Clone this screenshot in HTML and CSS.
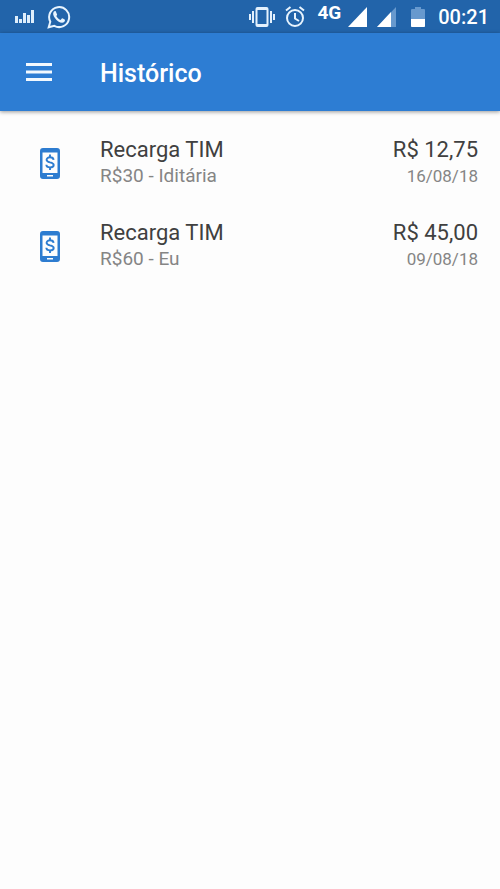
FILE: index.html
```html
<!DOCTYPE html>
<html lang="pt-BR">
<head>
<meta charset="utf-8">
<meta name="viewport" content="width=device-width, initial-scale=1">
<title>Histórico</title>
<link rel="stylesheet" href="styles.css">
</head>
<body>
<svg class="symbols" aria-hidden="true">
  <symbol id="phone-money" viewBox="0 0 20 31">
    <path fill="#2d7cd0" fill-rule="evenodd" d="M3 0H17Q20 0 20 3V28Q20 31 17 31H3Q0 31 0 28V3Q0 0 3 0ZM2.500 4.500V25H17.500V4.500ZM7 27V28.500H13V27Z"/>
    <path fill="none" stroke="#2d7cd0" stroke-width="1.900" d="M10 6.500V9.500M10 19V22M13.600 11.800C13.400 10.100 12 9.200 10 9.200C8.100 9.200 6.600 10.200 6.600 11.800C6.600 13.400 8.100 13.900 10 14.400C12.200 14.900 13.700 15.600 13.700 17C13.700 18.500 12.100 19.400 10 19.400C7.900 19.400 6.400 18.400 6.300 16.700"/>
  </symbol>
</svg>
<div class="status">
  <div class="status-group notices">
    <svg width="19" height="13" viewBox="0 0 19 13" fill="#dfeefb"><path d="M0 6h3v7H0zM4 9h3v4H4zM8 3h3v10H8zM12 5h3v8h-3zM16 0h3v13h-3z"/></svg>
    <svg width="24" height="24" viewBox="0 0 24 24"><path fill="none" stroke="#e8f4fe" stroke-width="2" d="M1.700 22.300 3.300 16.700A10 10 0 1 1 7.300 20.800Z"/><path fill="#e8f4fe" d="M8.700 6.300C8.400 5.800 7.400 5.900 6.900 6.500C5.500 8.200 6.200 10.500 7.900 12.900C9.900 15.700 12.700 17.700 15.100 17.700C16.700 17.600 18.100 16.500 18 14.900C18 14.500 15.800 13.400 15.200 13.300C14.700 13.300 14.200 14.600 13.600 15C12.300 14.700 10 12.600 9.300 11.100C9.400 10.600 10.200 10 10.100 9.400Z"/></svg>
  </div>
  <div class="status-group system">
    <svg width="26" height="20" viewBox="0 0 26 20" fill="#e4f1fd"><path fill-rule="evenodd" d="M8.500 0h9q2 0 2 2v16q0 2-2 2h-9q-2 0-2-2V2q0-2 2-2zm0 3v14h9V3zM3 4h2v12H3zM0 7h2v6H0zM21 4h2v12h-2zM24 7h2v6h-2z"/></svg>
    <svg width="20" height="21" viewBox="0 0 20 21" fill="none" stroke="#e8f4fe" stroke-width="2"><circle cx="10" cy="12" r="8"/><path d="M1 4.500 5.500 1M14.500 1 19 4.500M10 7v5.500l4 2.500"/></svg>
    <span class="network">4G</span>
    <svg width="19" height="20" viewBox="0 0 19 20"><path fill="#fff" d="M19 0V20H0Z"/></svg>
    <svg width="19" height="20" viewBox="0 0 19 20"><path fill="#6799ce" d="M19 0V20H0Z"/><path fill="#fff" d="M14 5V20H0Z"/></svg>
    <svg class="battery" width="14" height="20" viewBox="0 0 14 20"><path fill="#6799ce" d="M4 0h6v2h3q1 0 1 1v16q0 1-1 1H1q-1 0-1-1V3q0-1 1-1h3z"/><path fill="#fff" d="M0 12h14v7q0 1-1 1H1q-1 0-1-1z"/></svg>
    <time class="clock">00:21</time>
  </div>
</div>
<header class="appbar">
  <button class="menu" type="button" aria-label="Menu"><svg width="26" height="18" viewBox="0 0 26 18" fill="#f2f9ff"><path d="M0 0h26v3H0zM0 7.500h26v3H0zM0 15h26v3H0z"/></svg></button>
  <h1>Histórico</h1>
</header>
<main>
  <ul class="history">
    <li class="entry">
      <svg class="entry-icon" width="20" height="31"><use href="#phone-money"/></svg>
      <div class="details"><div class="primary">Recarga TIM</div><div class="secondary">R$30 - Iditária</div></div>
      <div class="amount"><div class="primary">R$ 12,75</div><div class="date">16/08/18</div></div>
    </li>
    <li class="entry">
      <svg class="entry-icon" width="20" height="31"><use href="#phone-money"/></svg>
      <div class="details"><div class="primary">Recarga TIM</div><div class="secondary">R$60 - Eu</div></div>
      <div class="amount"><div class="primary">R$ 45,00</div><div class="date">09/08/18</div></div>
    </li>
  </ul>
</main>
</body>
</html>
```
FILE: styles.css
```css
* { box-sizing: border-box; }
body { margin: 0; min-height: 100vh; background: #fdfdfd; font-family: Roboto, "Liberation Sans", sans-serif; color: #404040; }
svg { display: block; flex: none; }
.symbols { position: absolute; width: 0; height: 0; }
.status { display: flex; justify-content: space-between; height: 33px; padding: 0 11px 0 15px; background: #2264aa; color: #fff; }
.status-group { display: flex; align-items: center; }
.notices { gap: 13px; }
.system { gap: 10px; }
.network { align-self: flex-start; margin: 1px -3px 0 2px; font-size: 19px; line-height: 24px; font-weight: 700; }
.battery { margin: 0 3px 0 5px; }
.clock { font-size: 20px; line-height: 34px; font-weight: 500; }
.appbar { display: flex; align-items: center; height: 78px; padding-left: 14px; background: #2d7dd3; box-shadow: 0 1px 4px rgba(0, 0, 0, .4); }
.menu { display: flex; align-items: center; width: 86px; height: 48px; padding: 0 12px; border: 0; background: none; }
h1 { margin: 0; padding-top: 4px; font-size: 25px; line-height: 32px; font-weight: 500; color: #fff; }
.history { margin: 0; padding: 11px 0; list-style: none; }
.entry { display: flex; align-items: center; height: 83px; padding: 0 22px 0 40px; }
.entry-icon { margin-right: 40px; }
.details, .amount { padding-bottom: 4px; }
.details { flex: 1; }
.amount { text-align: right; }
.primary { font-size: 22px; line-height: 28px; }
.secondary, .date { line-height: 24px; color: #858585; }
.secondary { font-size: 19px; }
.date { font-size: 17px; }
```
